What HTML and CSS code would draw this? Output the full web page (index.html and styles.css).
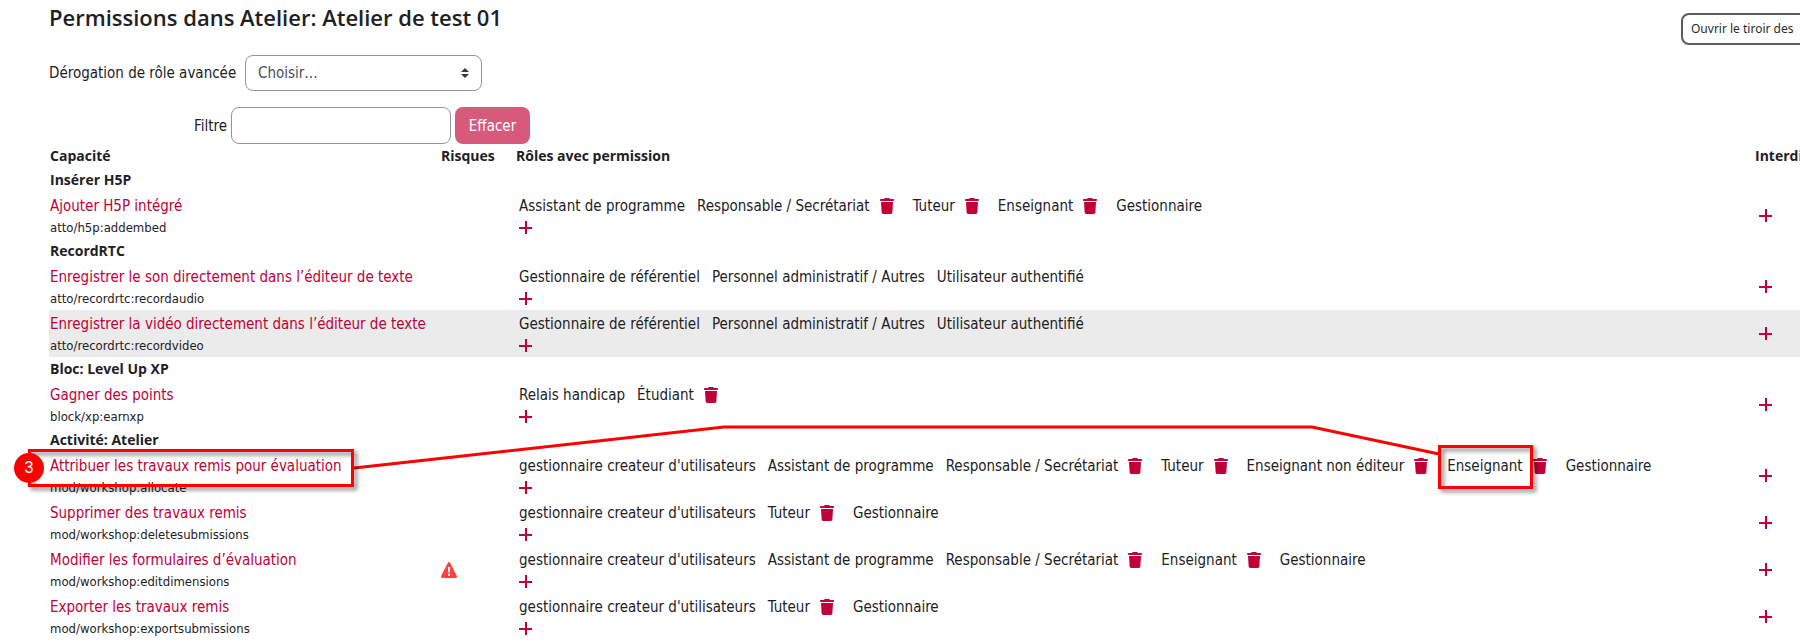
FILE: index.html
```html
<!DOCTYPE html>
<html lang="fr">
<head>
    <meta charset="UTF-8">
    <meta name="viewport" content="width=device-width, initial-scale=1.0">
    <title>Permissions dans Atelier: Atelier de test 01</title>
    <link rel="stylesheet" href="styles.css">
</head>
<body>
    <svg class="sprite" aria-hidden="true">
        <symbol id="trash" viewBox="0 0 448 512">
            <path d="M135.2 17.7L128 32H32C14.3 32 0 46.3 0 64S14.3 96 32 96H416c17.7 0 32-14.3 32-32s-14.3-32-32-32H320l-7.2-14.3C307.4 6.8 296.3 0 284.2 0H163.8c-12.1 0-23.2 6.8-28.6 17.7zM416 128H32L53.2 467c1.6 25.3 22.6 45 47.9 45H346.9c25.3 0 46.3-19.7 47.9-45L416 128z"/>
        </symbol>
        <symbol id="plus" viewBox="0 0 13 13">
            <path d="M6 0h2v6h5v2H8v5H6V8H0V6h6z"/>
        </symbol>
        <symbol id="warning" viewBox="0 0 16 16">
            <path fill-rule="evenodd" d="M8 0c.5 0 .9.3 1.1.7l6.700 13c.5 1-.1 2.300-1.200 2.300H1.400C.3 16-.3 14.700.2 13.700l6.700-13C7.100.3 7.500 0 8 0zM6.900 5l.3 5.500h1.600L9.100 5zM7 11.700v2h2v-2z"/>
        </symbol>
    </svg>

    <div class="page">
        <button class="drawer-button" type="button">Ouvrir le tiroir des</button>
        <h1 class="page-title">Permissions dans Atelier: Atelier de test 01</h1>
        <form class="role-form">
            <label for="role">Dérogation de rôle avancée</label>
            <div class="select-box">
                <select id="role">
                    <option>Choisir…</option>
                </select>
                <svg class="select-arrow" viewBox="0 0 8 10"><path d="M4 0l4 4H0zM4 10L0 6h8z"/></svg>
            </div>
        </form>
        <form class="filter-form">
            <label for="filter">Filtre</label>
            <input id="filter" type="text">
            <button class="clear-button" type="button">Effacer</button>
        </form>

        <table class="permissions">
            <colgroup>
                <col class="col-capability">
                <col class="col-risks">
                <col>
                <col class="col-prohibited">
            </colgroup>
            <thead>
                <tr>
                    <th>Capacité</th>
                    <th>Risques</th>
                    <th>Rôles avec permission</th>
                    <th>Interdit</th>
                </tr>
            </thead>
            <tbody>
                <tr class="section"><th colspan="4">Insérer H5P</th></tr>
                <tr>
                    <td><a href="#">Ajouter H5P intégré</a><div class="code">atto/h5p:addembed</div></td>
                    <td></td>
                    <td>
                        <div class="roles">
                            <span>Assistant de programme</span>
                            <span>Responsable / Secrétariat</span><button class="remove" aria-label="Supprimer"><svg><use href="#trash"/></svg></button>
                            <span>Tuteur</span><button class="remove" aria-label="Supprimer"><svg><use href="#trash"/></svg></button>
                            <span>Enseignant</span><button class="remove" aria-label="Supprimer"><svg><use href="#trash"/></svg></button>
                            <span>Gestionnaire</span>
                        </div>
                        <button class="add" aria-label="Ajouter"><svg><use href="#plus"/></svg></button>
                    </td>
                    <td><button class="add" aria-label="Interdire"><svg><use href="#plus"/></svg></button></td>
                </tr>
                <tr class="section"><th colspan="4">RecordRTC</th></tr>
                <tr>
                    <td><a href="#">Enregistrer le son directement dans l’éditeur de texte</a><div class="code">atto/recordrtc:recordaudio</div></td>
                    <td></td>
                    <td>
                        <div class="roles">
                            <span>Gestionnaire de référentiel</span>
                            <span>Personnel administratif / Autres</span>
                            <span>Utilisateur authentifié</span>
                        </div>
                        <button class="add" aria-label="Ajouter"><svg><use href="#plus"/></svg></button>
                    </td>
                    <td><button class="add" aria-label="Interdire"><svg><use href="#plus"/></svg></button></td>
                </tr>
                <tr class="highlight">
                    <td><a href="#">Enregistrer la vidéo directement dans l’éditeur de texte</a><div class="code">atto/recordrtc:recordvideo</div></td>
                    <td></td>
                    <td>
                        <div class="roles">
                            <span>Gestionnaire de référentiel</span>
                            <span>Personnel administratif / Autres</span>
                            <span>Utilisateur authentifié</span>
                        </div>
                        <button class="add" aria-label="Ajouter"><svg><use href="#plus"/></svg></button>
                    </td>
                    <td><button class="add" aria-label="Interdire"><svg><use href="#plus"/></svg></button></td>
                </tr>
                <tr class="section"><th colspan="4">Bloc: Level Up XP</th></tr>
                <tr>
                    <td><a href="#">Gagner des points</a><div class="code">block/xp:earnxp</div></td>
                    <td></td>
                    <td>
                        <div class="roles">
                            <span>Relais handicap</span>
                            <span>Étudiant</span><button class="remove" aria-label="Supprimer"><svg><use href="#trash"/></svg></button>
                        </div>
                        <button class="add" aria-label="Ajouter"><svg><use href="#plus"/></svg></button>
                    </td>
                    <td><button class="add" aria-label="Interdire"><svg><use href="#plus"/></svg></button></td>
                </tr>
                <tr class="section"><th colspan="4">Activité: Atelier</th></tr>
                <tr>
                    <td><a href="#">Attribuer les travaux remis pour évaluation</a><div class="code">mod/workshop:allocate</div></td>
                    <td></td>
                    <td>
                        <div class="roles">
                            <span>gestionnaire createur d'utilisateurs</span>
                            <span>Assistant de programme</span>
                            <span>Responsable / Secrétariat</span><button class="remove" aria-label="Supprimer"><svg><use href="#trash"/></svg></button>
                            <span>Tuteur</span><button class="remove" aria-label="Supprimer"><svg><use href="#trash"/></svg></button>
                            <span>Enseignant non éditeur</span><button class="remove" aria-label="Supprimer"><svg><use href="#trash"/></svg></button>
                            <span>Enseignant</span><button class="remove" aria-label="Supprimer"><svg><use href="#trash"/></svg></button>
                            <span>Gestionnaire</span>
                        </div>
                        <button class="add" aria-label="Ajouter"><svg><use href="#plus"/></svg></button>
                    </td>
                    <td><button class="add" aria-label="Interdire"><svg><use href="#plus"/></svg></button></td>
                </tr>
                <tr>
                    <td><a href="#">Supprimer des travaux remis</a><div class="code">mod/workshop:deletesubmissions</div></td>
                    <td></td>
                    <td>
                        <div class="roles">
                            <span>gestionnaire createur d'utilisateurs</span>
                            <span>Tuteur</span><button class="remove" aria-label="Supprimer"><svg><use href="#trash"/></svg></button>
                            <span>Gestionnaire</span>
                        </div>
                        <button class="add" aria-label="Ajouter"><svg><use href="#plus"/></svg></button>
                    </td>
                    <td><button class="add" aria-label="Interdire"><svg><use href="#plus"/></svg></button></td>
                </tr>
                <tr>
                    <td><a href="#">Modifier les formulaires d’évaluation</a><div class="code">mod/workshop:editdimensions</div></td>
                    <td><svg class="risk" role="img" aria-label="Risque"><use href="#warning"/></svg></td>
                    <td>
                        <div class="roles">
                            <span>gestionnaire createur d'utilisateurs</span>
                            <span>Assistant de programme</span>
                            <span>Responsable / Secrétariat</span><button class="remove" aria-label="Supprimer"><svg><use href="#trash"/></svg></button>
                            <span>Enseignant</span><button class="remove" aria-label="Supprimer"><svg><use href="#trash"/></svg></button>
                            <span>Gestionnaire</span>
                        </div>
                        <button class="add" aria-label="Ajouter"><svg><use href="#plus"/></svg></button>
                    </td>
                    <td><button class="add" aria-label="Interdire"><svg><use href="#plus"/></svg></button></td>
                </tr>
                <tr>
                    <td><a href="#">Exporter les travaux remis</a><div class="code">mod/workshop:exportsubmissions</div></td>
                    <td></td>
                    <td>
                        <div class="roles">
                            <span>gestionnaire createur d'utilisateurs</span>
                            <span>Tuteur</span><button class="remove" aria-label="Supprimer"><svg><use href="#trash"/></svg></button>
                            <span>Gestionnaire</span>
                        </div>
                        <button class="add" aria-label="Ajouter"><svg><use href="#plus"/></svg></button>
                    </td>
                    <td><button class="add" aria-label="Interdire"><svg><use href="#plus"/></svg></button></td>
                </tr>
            </tbody>
        </table>
    </div>

    <!-- step 3 callout drawn over the table -->
    <svg class="callout" width="1800" height="642" viewBox="0 0 1800 642">
        <polyline points="354,468 724,427 1312,427 1439,454"/>
        <rect class="frame" x="29.500" y="450.500" width="323" height="35"/>
        <rect class="frame" x="1439.500" y="446.500" width="92" height="41"/>
        <circle cx="29" cy="468" r="15"/>
        <text x="29" y="473">3</text>
    </svg>
</body>
</html>
```
FILE: styles.css
```css
* {
    box-sizing: border-box;
}
body {
    margin: 0;
    overflow: hidden;
    background-color: #fff;
    color: #1d2125;
    font-family: "DejaVu Sans Condensed", "DejaVu Sans", sans-serif;
    font-size: 15px;
    line-height: 24px;
}
button, input, select {
    font: inherit;
}
.sprite {
    display: none;
}
.page {
    position: relative;
    padding: 5px 0 0 49px;
}
.page-title {
    margin: 0;
    font-family: "Open Sans", sans-serif;
    font-size: 22px;
    font-weight: 600;
    line-height: 24px;
}
.drawer-button {
    position: absolute;
    top: 13px;
    left: calc(100% - 119px);
    width: 160px;
    height: 32px;
    padding: 0 8px;
    border: 2px solid #5c5c5c;
    border-radius: 8px;
    background-color: #fff;
    color: #2b2b2b;
    font-family: "Noto Sans", sans-serif;
    font-size: 12px;
    text-align: left;
    white-space: nowrap;
}

/* forms */
.role-form {
    display: flex;
    align-items: center;
    margin-top: 26px;
}
.role-form label {
    width: 196px;
    white-space: nowrap;
}
.select-box {
    position: relative;
    width: 237px;
}
.select-box select {
    display: block;
    appearance: none;
    width: 100%;
    height: 36px;
    padding: 0 12px;
    border: 1px solid #8f959e;
    border-radius: 8px;
    background-color: #fff;
    color: #495057;
}
.select-arrow {
    position: absolute;
    top: 13px;
    right: 13px;
    width: 8px;
    height: 10px;
    fill: #343a40;
}
.filter-form {
    display: flex;
    align-items: center;
    gap: 4px;
    margin-top: 16px;
}
.filter-form label {
    width: 178px;
    text-align: right;
}
.filter-form input {
    width: 220px;
    height: 37px;
    padding: 0 12px;
    border: 1px solid #8f959e;
    border-radius: 8px;
}
.clear-button {
    width: 75px;
    height: 37px;
    padding: 0;
    border: 0;
    border-radius: 8px;
    background-color: #d7597c;
    color: #fff;
}

/* permissions table */
.permissions {
    width: calc(100% + 54px);
    table-layout: fixed;
    border-collapse: collapse;
}
.col-capability {
    width: 391px;
}
.col-risks {
    width: 75px;
}
.col-prohibited {
    width: 100px;
}
.permissions th {
    height: 24px;
    padding: 0 1px;
    font-family: "Open Sans", sans-serif;
    font-size: 14px;
    font-weight: 700;
    line-height: 24px;
    text-align: left;
    white-space: nowrap;
}
.permissions td {
    height: 47px;
    padding: 1px 1px 0;
    white-space: nowrap;
}
.permissions td:nth-child(3) {
    padding: 1px 4px 0;
}
.permissions td:nth-child(4) {
    padding: 1px 5px 0;
}
.permissions a {
    color: #c00037;
    text-decoration: none;
}
.code {
    font-size: 13px;
    line-height: 20px;
}
.highlight {
    background-color: #ebebeb;
}
.roles {
    display: flex;
    align-items: center;
}
.roles span + span,
.remove + span {
    margin-left: 12px;
}
.remove {
    width: 14px;
    height: 16px;
    margin: 0 7px 0 10px;
    padding: 0;
    border: 0;
    background: none;
}
.remove svg {
    display: block;
    width: 14px;
    height: 16px;
    fill: #c00037;
}
.add {
    display: block;
    padding: 3px 0 4px;
    border: 0;
    background: none;
}
.add svg {
    display: block;
    width: 13px;
    height: 13px;
    fill: #c00037;
}
.risk {
    display: block;
    width: 16px;
    height: 16px;
    fill: #ff403c;
}

/* callout */
.callout {
    position: absolute;
    top: 0;
    left: 0;
    pointer-events: none;
}
.callout polyline,
.callout rect {
    fill: none;
    stroke: #f00;
    stroke-width: 3px;
}
.callout .frame {
    filter: drop-shadow(3px 3px 2px rgba(0, 0, 0, 0.5));
}
.callout circle {
    fill: #f00;
}
.callout text {
    fill: #fff;
    font-family: "Liberation Sans", sans-serif;
    font-size: 16px;
    text-anchor: middle;
}
```
